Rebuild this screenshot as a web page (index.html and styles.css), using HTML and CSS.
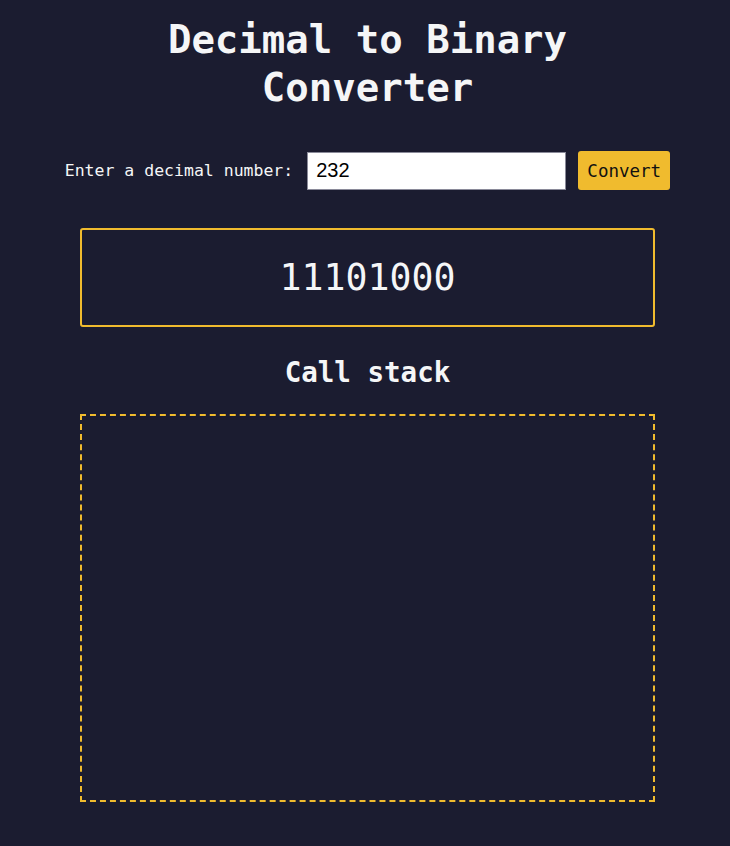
FILE: index.html
```html
<!DOCTYPE html>
<html>
<head>
<meta charset="utf-8">
<link rel="stylesheet" href="styles.css">
</head>
<body>
<main class="app">
  <h1 class="title">Decimal to Binary<br>Converter</h1>
  <div class="form-row">
    <label class="label" for="num">Enter a decimal number:</label>
    <input class="num-input" id="num" type="text" value="232">
    <button class="convert-btn">Convert</button>
  </div>
  <div class="result">11101000</div>
  <h2 class="stack-title">Call stack</h2>
  <div class="stack"></div>
</main>
</body>
</html>
```
FILE: styles.css
```css
html, body {
  margin: 0;
  padding: 0;
  background: #1b1c30;
}
body {
  padding-left: 5px;
  font-family: "DejaVu Sans Mono", monospace;
  color: #f5f6f7;
}
.app {
  display: flex;
  flex-direction: column;
  align-items: center;
  padding-top: 16px;
}
.title {
  margin: 0;
  font-size: 39px;
  line-height: 48px;
  font-weight: bold;
  text-align: center;
}
.form-row {
  display: flex;
  align-items: center;
  margin-top: 39px;
  height: 39px;
}
.label {
  font-size: 16.5px;
  font-weight: normal;
  margin-right: 14px;
}
.num-input {
  box-sizing: border-box;
  width: 259px;
  height: 38px;
  border: 1px solid #8a8a99;
  background: #fff;
  font-family: "Liberation Sans", Arial, sans-serif;
  font-size: 20px;
  color: #000;
  padding: 0 8px;
  margin: 0 12px 0 0;
  outline: none;
}
.convert-btn {
  box-sizing: border-box;
  width: 92px;
  height: 39px;
  border: none;
  border-radius: 3px;
  background: #f0bb2e;
  color: #111;
  font-family: "DejaVu Sans Mono", monospace;
  font-size: 17.5px;
  padding: 0;
}
.result {
  box-sizing: border-box;
  width: 575px;
  height: 99px;
  margin-top: 38px;
  border: 2px solid #f0bb2e;
  border-radius: 3px;
  display: flex;
  align-items: center;
  justify-content: center;
  font-size: 36.5px;
}
.stack-title {
  margin: 29px 0 0;
  font-size: 27.5px;
  line-height: 32px;
  font-weight: bold;
}
.stack {
  box-sizing: border-box;
  width: 575px;
  height: 388px;
  margin-top: 26px;
  border: 2px dashed #f0bb2e;
}
```
